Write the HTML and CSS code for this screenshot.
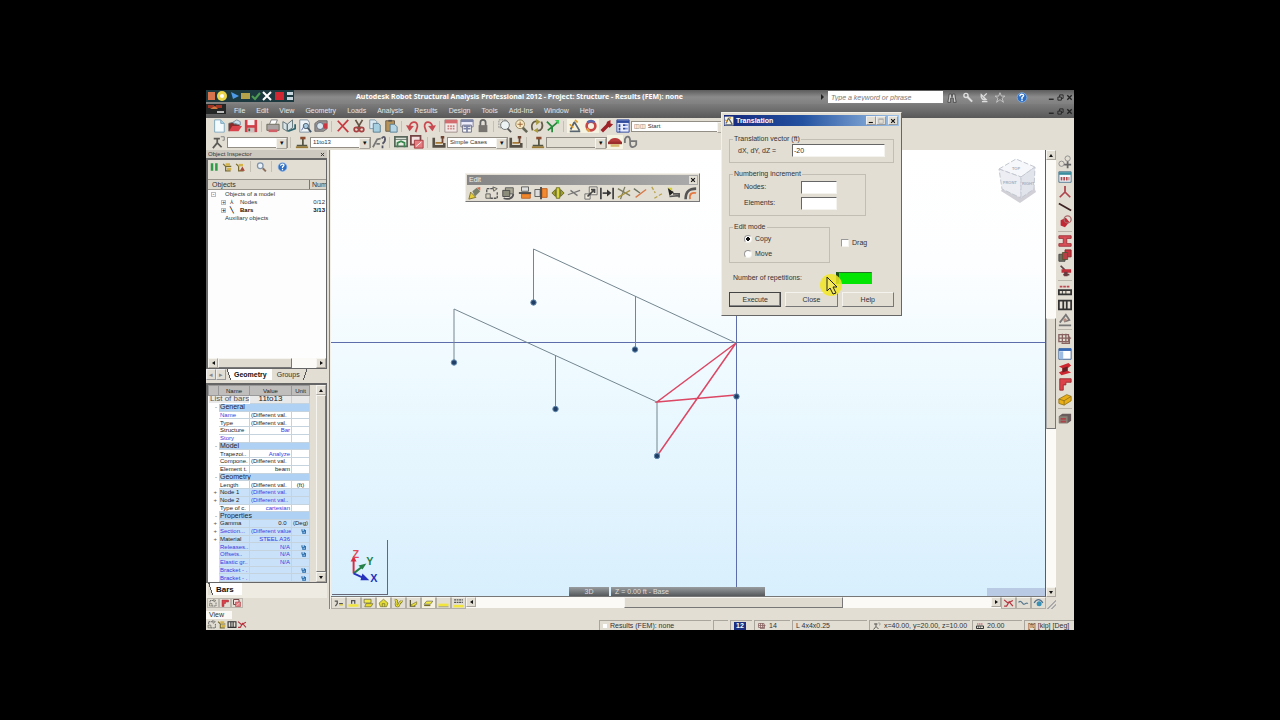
FILE: index.html
```html
<!DOCTYPE html>
<html lang="en">
<head>
    <meta charset="UTF-8">
    <meta name="viewport" content="width=device-width, initial-scale=1.0">
    <title>Autodesk Robot Structural Analysis Professional 2012</title>
    <link rel="stylesheet" href="styles.css">
</head>
<body>
    <!-- Icon sprite -->
    <svg class="sprite" aria-hidden="true">
        <symbol id="new" viewBox="0 0 16 16"><path d="M3 1h7l4 4v10H3z" fill="#f4fbff" stroke="#7aa2b8"/><path d="M10 1v4h4" fill="#a8d4ea" stroke="#7aa2b8"/></symbol>
        <symbol id="open" viewBox="0 0 16 16"><path d="M1 14V5l5-1 1 2h6v3" fill="#8b2a2a" stroke="#555"/><path d="M1 14l4-6h11l-4 6z" fill="#d9434b"/><path d="M5 4l5-3 4 2v4z" fill="#cde2ef" stroke="#789"/></symbol>
        <symbol id="save" viewBox="0 0 16 16"><path d="M1 1h14v14H1z" fill="#cf4048"/><path d="M4 1h8v6H4z" fill="#f3eeee"/><path d="M4 10h8v5H4z" fill="#c9c0c0"/><path d="M5 11h2v3H5z" fill="#553"/></symbol>
        <symbol id="print" viewBox="0 0 16 16"><path d="M4 6l2-5h7l-2 5" fill="#fff" stroke="#777"/><path d="M1 6h14v7H1z" fill="#aaa3a3" stroke="#665"/><path d="M3 12h10v3H3z" fill="#cf6068"/></symbol>
        <symbol id="book" viewBox="0 0 16 16"><path d="M1 3l5 3v8L1 11zM6 6l6-5v9l-6 4z" fill="#d8e4e8" stroke="#566a70"/><path d="M7 14l8-3V6" fill="none" stroke="#2d6670" stroke-width="2"/></symbol>
        <symbol id="preview" viewBox="0 0 16 16"><path d="M2 1h9l2 3v11H2z" fill="#eef4f8" stroke="#789"/><circle cx="9" cy="8" r="3" fill="#a6c8de" stroke="#456"/><path d="M11 10l4 5" stroke="#456" stroke-width="2"/><path d="M4 13l3-5" stroke="#569"/></symbol>
        <symbol id="capture" viewBox="0 0 16 16"><path d="M1 5l4-3h10v9l-4 3H1z" fill="#9a9393" stroke="#666"/><circle cx="7" cy="8" r="4" fill="#d9e6ee" stroke="#567"/><path d="M11 5h4v6h-4z" fill="#cc3640"/></symbol>
        <symbol id="delete" viewBox="0 0 16 16"><path d="M2 2l12 13M14 1L2 14" stroke="#c93a40" stroke-width="2"/></symbol>
        <symbol id="cut" viewBox="0 0 16 16"><path d="M4 1l6 10M12 1L6 11" stroke="#654" stroke-width="2"/><circle cx="5" cy="12" r="2.500" fill="none" stroke="#a84242" stroke-width="2"/><circle cx="11" cy="12" r="2.500" fill="none" stroke="#a84242" stroke-width="2"/></symbol>
        <symbol id="copy" viewBox="0 0 16 16"><path d="M2 1h6l2 2v8H2z" fill="#dceaf2" stroke="#7894a4"/><path d="M6 5h6l2 2v8H6z" fill="#a7cfe2" stroke="#55798c"/></symbol>
        <symbol id="paste" viewBox="0 0 16 16"><path d="M2 2h10v12H2z" fill="#b59258" stroke="#654"/><path d="M5 1h4v2H5z" fill="#555"/><path d="M7 6h5l3 3v6H7z" fill="#b6d6e6" stroke="#55798c"/></symbol>
        <symbol id="undo" viewBox="0 0 16 16"><path d="M4 10C4 2 14 1 13 9l-2 6" fill="none" stroke="#c84a50" stroke-width="2"/><path d="M0 7l9 1-5 6z" fill="#c84a50"/></symbol>
        <symbol id="redo" viewBox="0 0 16 16"><path d="M12 10C12 2 2 1 3 9l2 6" fill="none" stroke="#c84a50" stroke-width="2"/><path d="M16 7l-9 1 5 6z" fill="#c84a50"/></symbol>
        <symbol id="calc" viewBox="0 0 16 16"><path d="M1 1h14v14H1z" fill="#f3e9e6" stroke="#998888"/><path d="M1 1h14v4H1z" fill="#d46b6e"/><path d="M4 8h8M4 11h8" stroke="#cc8484" stroke-width="2" stroke-dasharray="2 1"/></symbol>
        <symbol id="tables" viewBox="0 0 16 16"><path d="M1 1h14v8H1z" fill="#eef" stroke="#778"/><path d="M1 2h14" stroke="#7d86a8" stroke-width="3"/><path d="M3 7h10v8H3z" fill="#fff" stroke="#667"/><path d="M4 8h8M4 11h8M8 8v7" stroke="#7d86a8" stroke-width="2"/></symbol>
        <symbol id="lock" viewBox="0 0 16 16"><path d="M5 8V4a3 3 0 016 0v4" fill="none" stroke="#666" stroke-width="2"/><path d="M3 7h10v8H3z" fill="#77736f"/></symbol>
        <symbol id="zoomwin" viewBox="0 0 16 16"><path d="M1 1h9v9H1z" fill="none" stroke="#888" stroke-dasharray="2 1"/><circle cx="8" cy="7" r="5" fill="#edf2f3" stroke="#66696a"/><path d="M11 11l4 4" stroke="#555" stroke-width="2"/></symbol>
        <symbol id="zoomplus" viewBox="0 0 16 16"><circle cx="7" cy="6" r="5" fill="#f6e9c4" stroke="#8c7a50"/><path d="M4 6h6M7 3v6" stroke="#965a2c"/><path d="M10 10l5 5" stroke="#665" stroke-width="3"/></symbol>
        <symbol id="rotate" viewBox="0 0 16 16"><path d="M3 13C0 5 5 2 8 3M13 3c3 6 0 11-5 10" fill="none" stroke="#675c48" stroke-width="2"/><path d="M7 0l5 3-5 4zM9 10l-5 3 5 3z" fill="#a99b40"/></symbol>
        <symbol id="axesgreen" viewBox="0 0 16 16"><path d="M1 3l6 6v6M7 9l7-6M2 13l5-4" fill="none" stroke="#26883a" stroke-width="2"/><path d="M10 1h5v5z" fill="#3fca55"/></symbol>
        <symbol id="edit" viewBox="0 0 16 16"><path d="M1 1h14v14H1z" fill="#f7f3df"/><path d="M2 14h12M7 4l-4 8M7 3l6 10" fill="none" stroke="#596471" stroke-width="2"/><path d="M2 6l4 4M8 1l3 3" stroke="#db9d30" stroke-width="2"/></symbol>
        <symbol id="ring" viewBox="0 0 16 16"><circle cx="8" cy="8" r="5" fill="none" stroke="#c84646" stroke-width="3"/><path d="M4 4a6 6 0 018 0" fill="none" stroke="#5967af" stroke-width="3"/><path d="M3 11l3 3" stroke="#dba045" stroke-width="3"/></symbol>
        <symbol id="wrench" viewBox="0 0 16 16"><path d="M2 14l8-8" stroke="#9e2328" stroke-width="4"/><path d="M8 3l4-2v4l3 1-4 4-4-3z" fill="#9e2328"/></symbol>
        <symbol id="layout" viewBox="0 0 16 16"><path d="M1 1h14v14H1z" fill="#e8eeff" stroke="#263d94"/><path d="M1 3h14" stroke="#304c9e" stroke-width="3"/><path d="M4 6v9M8 7h5M8 11h5" stroke="#304c9e" stroke-width="2" stroke-dasharray="3 1"/></symbol>
        <symbol id="node" viewBox="0 0 16 16"><path d="M6 3v6l-5 6M6 9l5 5M2 4h7" fill="none" stroke="#5b5a54" stroke-width="2"/><path d="M10 2h4v4h-2" fill="none" stroke="#777" stroke-width="1"/></symbol>
        <symbol id="support" viewBox="0 0 16 16"><path d="M2 12h12M9 12V4" stroke="#554" stroke-width="2"/><path d="M6 2h6v3H6z" fill="#8a4b30"/><path d="M1 14h14" stroke="#9a7a34" stroke-width="2"/></symbol>
        <symbol id="query" viewBox="0 0 16 16"><path d="M1 14L6 5l4-1M5 10h4" fill="none" stroke="#777" stroke-width="2"/><path d="M11 4c4-5 6 2 1 6M12 12v3" fill="none" stroke="#556" stroke-width="2"/></symbol>
        <symbol id="frame" viewBox="0 0 16 16"><path d="M1 2h14v11H1z" fill="#e9efe4" stroke="#59685b" stroke-width="2"/><path d="M1 5h14" stroke="#59685b"/><path d="M4 14V9l4-2 4 2v5" fill="none" stroke="#3b8750" stroke-width="2"/></symbol>
        <symbol id="framered" viewBox="0 0 16 16"><path d="M1 1h11v10H1z" fill="#f4dfdf" stroke="#754444" stroke-width="2"/><path d="M5 6h10v9H5z" fill="#e47c80" stroke="#a1363c"/><path d="M7 13l6-5" stroke="#fff"/></symbol>
        <symbol id="load" viewBox="0 0 16 16"><path d="M2 3v10h12V9" fill="none" stroke="#554f45" stroke-width="3"/><path d="M4 9h8" fill="none" stroke="#a87932" stroke-width="2"/><path d="M10 1h4v3h-4zM11 4h2v5h-2z" fill="#704432"/></symbol>
        <symbol id="burger" viewBox="0 0 16 16"><path d="M1 8c1-6 13-6 14 0z" fill="#b73b3b"/><path d="M0 9h16" stroke="#9c2d2d" stroke-width="3"/><path d="M3 12h10" stroke="#d5b76d" stroke-width="3"/></symbol>
        <symbol id="wave" viewBox="0 0 16 16"><path d="M1 9V5c2-5 6-4 6 2v3c0 5 5 5 7 1V7H8" fill="none" stroke="#777" stroke-width="2"/></symbol>
        <symbol id="pause" viewBox="0 0 16 16"><path d="M4 2v12M11 2v12" stroke="#2f9a48" stroke-width="4"/></symbol>
        <symbol id="tree" viewBox="0 0 16 16"><path d="M1 3l4 4h9M5 6v8h8" fill="none" stroke="#776b30" stroke-width="2"/><path d="M5 2h7v4H5zM7 9h7v4H7z" fill="#d3b44c"/></symbol>
        <symbol id="treered" viewBox="0 0 16 16"><path d="M1 3l4 4M5 6v8h8" fill="none" stroke="#776b30" stroke-width="2"/><path d="M5 3h7v4H5z" fill="#d3b44c"/><path d="M7 14l4-7 4 7z" fill="#a74838"/></symbol>
        <symbol id="search" viewBox="0 0 16 16"><circle cx="6" cy="6" r="4.500" fill="#eaf3fa" stroke="#7f93aa" stroke-width="2"/><path d="M10 10l5 5" stroke="#8c715d" stroke-width="3"/></symbol>
        <symbol id="help" viewBox="0 0 16 16"><circle cx="8" cy="8" r="7" fill="#2e6fc4" stroke="#8db6e8"/><path d="M5 6c0-4 7-3 5 0L8 8v2M8 11v2" fill="none" stroke="#fff" stroke-width="2"/></symbol>
        <symbol id="brush" viewBox="0 0 16 16"><path d="M1 15l2-8 6 6z" fill="#e6cf34" stroke="#776c30"/><path d="M5 6l5-4 4 4-6 6z" fill="#777e69"/><path d="M10 2l4-1v4z" fill="#c96a4b"/></symbol>
        <symbol id="boxes" viewBox="0 0 16 16"><path d="M2 7V3h8M14 7v7H6" fill="none" stroke="#555" stroke-width="1.500" stroke-dasharray="3 1"/><path d="M9 1l5 2-4 3zM1 9h5v5H1z" fill="#d8d3be" stroke="#555"/></symbol>
        <symbol id="turn" viewBox="0 0 16 16"><path d="M5 2h9v7H5z" fill="#aaa997" stroke="#555"/><path d="M2 5h8v7H2z" fill="#8c8c7a" stroke="#444"/><path d="M3 14c5 2 11 0 11-5" fill="none" stroke="#555" stroke-width="2"/></symbol>
        <symbol id="mirrorh" viewBox="0 0 16 16"><path d="M4 1h8v5H4z" fill="#ddd" stroke="#555"/><path d="M4 9h10v5H4z" fill="#ef862c" stroke="#b96025"/><path d="M1 8h14" stroke="#444" stroke-width="2"/></symbol>
        <symbol id="mirrorv" viewBox="0 0 16 16"><path d="M1 4h6v8H1z" fill="#ddd" stroke="#555"/><path d="M9 3h6v10H9z" fill="#f18a30" stroke="#b95e22"/><path d="M8 1v14" stroke="#444" stroke-width="2"/></symbol>
        <symbol id="split" viewBox="0 0 16 16"><path d="M5 4v8L1 8zM11 4v8l4-4z" fill="#a2a22a" stroke="#666325"/><path d="M6 2h4v12H6z" fill="#d8d43c" stroke="#66681f"/></symbol>
        <symbol id="divide" viewBox="0 0 16 16"><path d="M1 10L15 5M4 5l8 6" stroke="#777" stroke-width="1.500"/></symbol>
        <symbol id="scale" viewBox="0 0 16 16"><path d="M1 9h6v6H1zM6 1h9v9H6z" fill="#eeeade" stroke="#666"/><path d="M4 12l8-8M8 4h4v4" fill="none" stroke="#444" stroke-width="2"/></symbol>
        <symbol id="stretch" viewBox="0 0 16 16"><path d="M1 2v13M15 2v13M3 8h7" fill="none" stroke="#444" stroke-width="2"/><path d="M8 4l5 4-5 4z" fill="#333"/></symbol>
        <symbol id="intersect" viewBox="0 0 16 16"><path d="M1 3l14 8M9 1L4 15" stroke="#7c7b61" stroke-width="1.500"/><path d="M1 13l14-8" stroke="#a7933f" stroke-width="1.500"/></symbol>
        <symbol id="trim" viewBox="0 0 16 16"><path d="M1 3l7 5" stroke="#69705f" stroke-width="1.500"/><path d="M3 13l12-9" stroke="#d57948" stroke-width="1.500"/></symbol>
        <symbol id="extend" viewBox="0 0 16 16"><path d="M2 1l4 7M5 14l10-6" stroke="#b8a34a" stroke-width="1.500" stroke-dasharray="4 2"/></symbol>
        <symbol id="chamfer" viewBox="0 0 16 16"><path d="M2 2l7 5-5 4z" fill="#222"/><path d="M2 2h5v4z" fill="#d8d12b"/><path d="M4 12l11-1M8 9h7v4" fill="none" stroke="#555" stroke-width="2"/></symbol>
        <symbol id="fillet" viewBox="0 0 16 16"><path d="M3 15C3 6 7 3 15 3" fill="none" stroke="#555" stroke-width="3"/><path d="M8 15C7 9 10 7 15 8" fill="none" stroke="#e47840" stroke-width="2"/></symbol>
        <symbol id="numbers" viewBox="0 0 16 16"><circle cx="4" cy="10" r="3" fill="none" stroke="#888"/><circle cx="11" cy="4" r="3" fill="none" stroke="#888"/><path d="M11 7v8M7 11h8" stroke="#666" stroke-width="2"/></symbol>
        <symbol id="window" viewBox="0 0 16 16"><path d="M1 2h14v12H1z" fill="#f4f8fa" stroke="#446b86"/><path d="M1 4h14" stroke="#3a8d9d" stroke-width="3"/><path d="M3 10h10" stroke="#b04b50" stroke-width="4" stroke-dasharray="2 1"/></symbol>
        <symbol id="tripod" viewBox="0 0 16 16"><path d="M8 1v8M8 8l-6 6M8 8l6 6" stroke="#ad454c" stroke-width="2"/></symbol>
        <symbol id="bar" viewBox="0 0 16 16"><path d="M1 4l14 8" stroke="#3d2323" stroke-width="2"/></symbol>
        <symbol id="cylinder" viewBox="0 0 16 16"><path d="M3 6l6-3 4 5-5 6-5-2z" fill="#c02834"/><circle cx="11" cy="5" r="4" fill="none" stroke="#a96a6a" stroke-width="1.500"/></symbol>
        <symbol id="ibeam" viewBox="0 0 16 16"><path d="M1 2h14v3h-5v6h5v3H1v-3h5V5H1z" fill="#d95058" stroke="#9c3038"/></symbol>
        <symbol id="solids" viewBox="0 0 16 16"><path d="M8 1h7v8H8z" fill="#cb3540" stroke="#802a2a"/><path d="M1 6h7v8H1z" fill="#707060" stroke="#444"/><path d="M5 4h6v8H5z" fill="#b83f45" stroke="#553"/></symbol>
        <symbol id="release" viewBox="0 0 16 16"><path d="M3 2l5 5M6 12h7" fill="none" stroke="#5d4545" stroke-width="2"/><path d="M4 6h11v4H4z" fill="#bd2f3b"/><path d="M7 9h4v5H7z" fill="#6a3a3e"/></symbol>
        <symbol id="loadbar" viewBox="0 0 16 16"><path d="M2 4h12" stroke="#ba4950" stroke-width="2" stroke-dasharray="3 1"/><path d="M1 8h14v5H1z" fill="#e5ded1" stroke="#333" stroke-width="2"/><path d="M5 8v5M9 8v5" stroke="#333"/></symbol>
        <symbol id="film" viewBox="0 0 16 16"><path d="M1 3h14v10H1z" fill="#e4e0d8" stroke="#333" stroke-width="2"/><path d="M6 3v10M10 3v10" stroke="#333" stroke-width="2"/></symbol>
        <symbol id="mass" viewBox="0 0 16 16"><path d="M1 14h14M2 11l7-9 4 6-6 2" fill="none" stroke="#777" stroke-width="2"/><circle cx="8" cy="8" r="2" fill="#b58c80"/></symbol>
        <symbol id="mesh" viewBox="0 0 16 16"><path d="M1 3h11v8H1zM1 7h14M5 2v10M9 2v10M13 5v8H4" fill="none" stroke="#876261" stroke-width="1.500"/></symbol>
        <symbol id="form" viewBox="0 0 16 16"><path d="M1 2h14v12H1z" fill="#fff" stroke="#31588f"/><path d="M1 3h14" stroke="#3569b5" stroke-width="3"/><path d="M4 5v9" stroke="#9ebce1" stroke-width="4"/></symbol>
        <symbol id="steel" viewBox="0 0 16 16"><path d="M1 5l11-4 3 3-4 3v3l4 2-11 3-3-3 4-2V7z" fill="#cd2831"/><path d="M5 7l6-2v5l-6 2z" fill="#672126"/></symbol>
        <symbol id="angle" viewBox="0 0 16 16"><path d="M2 2h13v4H9v3H6v6H2z" fill="#db4249" stroke="#9b2b30"/></symbol>
        <symbol id="timber" viewBox="0 0 16 16"><path d="M1 8l9-5 5 2v5l-8 5-6-2z" fill="#e9ae17" stroke="#94751b"/><path d="M1 8l6 2 8-5M7 10v5" fill="none" stroke="#94751b"/></symbol>
        <symbol id="cube" viewBox="0 0 16 16"><path d="M1 6l4-3h10v8l-4 3H1z" fill="#6a5c5c"/><path d="M1 6h10v8H1z" fill="#888174"/><path d="M3 9h6M3 12h6" stroke="#b04148" stroke-width="2"/></symbol>
        <symbol id="ylayer" viewBox="0 0 16 16"><path d="M1 10l4-5h10l-4 5z" fill="#f1e945" stroke="#555"/><path d="M1 12h10" stroke="#776f20" stroke-width="2"/></symbol>
        <symbol id="ybox" viewBox="0 0 16 16"><path d="M1 2h11v6H1z" fill="#f1e945" stroke="#555"/><path d="M4 9h11l-3 5H2z" fill="#e9dd32" stroke="#655f20"/></symbol>
        <symbol id="yhouse" viewBox="0 0 16 16"><path d="M1 8l7-6 7 6-2 6H3z" fill="#e4dd35" stroke="#65642d"/><path d="M6 14V9h4v5" fill="none" stroke="#65642d"/></symbol>
        <symbol id="yload" viewBox="0 0 16 16"><path d="M3 3v10h8" fill="none" stroke="#575432" stroke-width="2"/><path d="M4 11l9-5v4l-5 3H4z" fill="#e8df38" stroke="#766f25"/></symbol>
        <symbol id="yarc" viewBox="0 0 16 16"><path d="M2 3c4 0 4 3 2 6 0 5 4 5 5 1s4-3 4-6" fill="none" stroke="#75702b" stroke-width="4"/><path d="M2 3c4 0 4 3 2 6 0 5 4 5 5 1s4-3 4-6" fill="none" stroke="#ebe13a" stroke-width="2"/></symbol>
        <symbol id="yline" viewBox="0 0 16 16"><path d="M0 10h16v4H0z" fill="#f1e53d"/><path d="M5 9V4h5v5" fill="none" stroke="#555" stroke-width="2"/></symbol>
        <symbol id="yband" viewBox="0 0 16 16"><path d="M0 9h16v4H0z" fill="#f1e53d"/><path d="M0 14h16" stroke="#888235"/></symbol>
        <symbol id="ytext" viewBox="0 0 16 16"><path d="M0 11h16v4H0z" fill="#f1e53d"/><path d="M1 3h14M1 7h14" stroke="#555" stroke-width="2" stroke-dasharray="3 1"/></symbol>
        <symbol id="ynum" viewBox="0 0 16 16"><path d="M2 5h4v4L3 13M9 9h6" fill="none" stroke="#555" stroke-width="2"/><path d="M9 11h6" stroke="#dfcc35" stroke-width="2"/></symbol>
        <symbol id="diagram" viewBox="0 0 16 16"><path d="M1 3l6 5 8-4M1 13h4l4-7 6 7" fill="none" stroke="#b53640" stroke-width="2"/></symbol>
        <symbol id="curve" viewBox="0 0 16 16"><path d="M0 7c5-5 6 4 9 3s4-3 6-1" fill="none" stroke="#5b7a90" stroke-width="2"/></symbol>
        <symbol id="eye" viewBox="0 0 16 16"><path d="M1 8c4-7 10-7 14 0" fill="none" stroke="#56708a" stroke-width="2"/><circle cx="9" cy="9" r="4" fill="#3a91b6"/></symbol>
        <symbol id="binoc" viewBox="0 0 16 16"><path d="M2 15l2-12h3l1 5 1-5h3l2 12h-4V9H6v6z" fill="#ccc" stroke="#333"/></symbol>
        <symbol id="key" viewBox="0 0 16 16"><circle cx="5" cy="5" r="3" fill="none" stroke="#ddd" stroke-width="2"/><path d="M7 7l7 7" stroke="#ddd" stroke-width="3"/></symbol>
        <symbol id="dish" viewBox="0 0 16 16"><path d="M4 4l7 7c-5 1-8-2-7-7zM12 2L8 6M5 14h8" fill="#999" stroke="#ddd" stroke-width="2"/></symbol>
        <symbol id="star" viewBox="0 0 16 16"><path d="M8 1l2 5h5l-4 3 2 6-5-4-5 4 2-6-4-3h5z" fill="#777" stroke="#ddd"/></symbol>
        <symbol id="globe" viewBox="0 0 16 16"><path d="M4 3v4a3 3 0 006 0V3M6 9v5h7V5" fill="none" stroke="#286ba9" stroke-width="3"/></symbol>
        <symbol id="minbtn" viewBox="0 0 16 16"><path d="M2 12h11" stroke="currentColor" stroke-width="3"/></symbol>
        <symbol id="maxbtn" viewBox="0 0 16 16"><path d="M2 7h8v7H2zM6 7V2h8v8h-4" fill="none" stroke="currentColor" stroke-width="2"/></symbol>
        <symbol id="framebtn" viewBox="0 0 16 16"><path d="M2 2h12v12H2zM2 4h12" fill="none" stroke="currentColor" stroke-width="2"/></symbol>
        <symbol id="closebtn" viewBox="0 0 16 16"><path d="M3 3l10 10M13 3L3 13" stroke="currentColor" stroke-width="3"/></symbol>
    </svg>

    <div class="app">
        <header class="titlebar">
            <div class="quick">
                <svg viewBox="0 0 88 12" aria-hidden="true">
                    <rect width="88" height="12" fill="#1c3940"/>
                    <rect x="2" y="2" width="7" height="8" fill="#d7744e"/><circle cx="16" cy="6" r="5" fill="#e9d64a"/><circle cx="16" cy="6" r="2" fill="#fff"/>
                    <path d="M25 2l8 4-6 3z" fill="#4e9ae6"/><path d="M35 3h9v6h-9z" fill="#b4a24b"/><path d="M46 6l3 3 5-6" fill="none" stroke="#4d9b52" stroke-width="2"/>
                    <path d="M57 2l8 8M65 2l-8 8" stroke="#fff" stroke-width="2"/><rect x="69" y="2" width="9" height="8" fill="#d12732"/><path d="M81 2h6v3h-6zM81 7h6v3h-6z" fill="#c9d8df"/>
                </svg>
            </div>
            <h1>Autodesk Robot Structural Analysis Professional 2012 - Project: Structure - Results (FEM): none</h1>
            <div class="search">
                <span class="arrow-right"></span>
                <input type="text" aria-label="Search" placeholder="Type a keyword or phrase">
                <svg class="icon"><use href="#binoc"/></svg>
                <svg class="icon"><use href="#key"/></svg>
                <svg class="icon"><use href="#dish"/></svg>
                <svg class="icon"><use href="#star"/></svg>
                <svg class="icon info"><use href="#help"/></svg>
            </div>
            <div class="winbtns">
                <svg><use href="#minbtn"/></svg><svg><use href="#maxbtn"/></svg><svg><use href="#closebtn"/></svg>
            </div>
        </header>
        <nav class="menubar">
            <svg class="logo" viewBox="0 0 20 10" aria-hidden="true"><rect width="20" height="10" fill="#252727"/><path d="M2 1h6v3H2zM10 1h6v3h-6z" fill="#a03425"/><path d="M4 5l5-3 3 3z" fill="#d17941"/><path d="M11 8h7" stroke="#bbb" stroke-width="2"/></svg>
            <ul>
                <li>File</li>
                <li>Edit</li>
                <li>View</li>
                <li>Geometry</li>
                <li>Loads</li>
                <li>Analysis</li>
                <li>Results</li>
                <li>Design</li>
                <li>Tools</li>
                <li>Add-Ins</li>
                <li>Window</li>
                <li>Help</li>
            </ul>
            <div class="winbtns">
                <svg><use href="#minbtn"/></svg><svg><use href="#maxbtn"/></svg><svg><use href="#closebtn"/></svg>
            </div>
        </nav>

        <div class="toolbar">
            <svg class="icon"><use href="#new"/></svg>
            <svg class="icon"><use href="#open"/></svg>
            <svg class="icon"><use href="#save"/></svg>
            <i class="sep"></i>
            <svg class="icon"><use href="#print"/></svg>
            <svg class="icon"><use href="#book"/></svg>
            <svg class="icon"><use href="#preview"/></svg>
            <svg class="icon"><use href="#capture"/></svg>
            <i class="sep"></i>
            <svg class="icon"><use href="#delete"/></svg>
            <svg class="icon"><use href="#cut"/></svg>
            <svg class="icon"><use href="#copy"/></svg>
            <svg class="icon"><use href="#paste"/></svg>
            <i class="sep"></i>
            <svg class="icon"><use href="#undo"/></svg>
            <svg class="icon"><use href="#redo"/></svg>
            <i class="sep"></i>
            <svg class="icon"><use href="#calc"/></svg>
            <svg class="icon"><use href="#tables"/></svg>
            <svg class="icon"><use href="#lock"/></svg>
            <i class="sep"></i>
            <svg class="icon"><use href="#zoomwin"/></svg>
            <svg class="icon"><use href="#zoomplus"/></svg>
            <svg class="icon"><use href="#rotate"/></svg>
            <svg class="icon"><use href="#axesgreen"/></svg>
            <i class="sep"></i>
            <svg class="icon active"><use href="#edit"/></svg>
            <svg class="icon active"><use href="#ring"/></svg>
            <svg class="icon"><use href="#wrench"/></svg>
            <svg class="icon"><use href="#layout"/></svg>
            <div class="combo combo-wide">
                <select aria-label="Layout"><option>&#9707;&#9707; Start</option></select>
            </div>
        </div>
        <div class="toolbar">
            <svg class="icon"><use href="#node"/></svg>
            <div class="combo"><select aria-label="Node selection"><option></option></select></div>
            <i class="sep"></i>
            <svg class="icon"><use href="#support"/></svg>
            <div class="combo"><select aria-label="Bar selection"><option>11to13</option></select></div>
            <svg class="icon"><use href="#query"/></svg>
            <i class="sep"></i>
            <svg class="icon"><use href="#frame"/></svg>
            <svg class="icon"><use href="#framered"/></svg>
            <i class="sep"></i>
            <svg class="icon"><use href="#load"/></svg>
            <div class="combo"><select aria-label="Load case"><option>Simple Cases</option></select></div>
            <svg class="icon"><use href="#load"/></svg>
            <i class="sep"></i>
            <svg class="icon"><use href="#support"/></svg>
            <div class="combo"><select aria-label="Mode" disabled><option></option></select></div>
            <svg class="icon active"><use href="#burger"/></svg>
            <svg class="icon"><use href="#wave"/></svg>
        </div>

        <main class="workspace">
            <aside class="sidebar">
                <div class="pane-title"><span>Object Inspector</span><svg><use href="#closebtn"/></svg></div>
                <section class="inspector">
                    <div class="inspector-tools">
                        <svg class="icon"><use href="#pause"/></svg>
                        <svg class="icon"><use href="#tree"/></svg>
                        <svg class="icon"><use href="#treered"/></svg>
                        <i class="sep"></i>
                        <svg class="icon"><use href="#search"/></svg>
                        <i class="sep"></i>
                        <svg class="icon"><use href="#help"/></svg>
                    </div>
                    <div class="tree-head"><span>Objects</span><span>Num</span></div>
                    <ul class="tree">
                        <li><i class="box">-</i><span>Objects of a model</span></li>
                        <li class="child"><i class="box">+</i><i class="mark">&#8516;</i><span>Nodes</span><em>0/12</em></li>
                        <li class="child strong"><i class="box">+</i><i class="mark">&#9586;</i><span>Bars</span><em>3/13</em></li>
                        <li><i class="box none"></i><span>Auxiliary objects</span></li>
                    </ul>
                    <div class="hscroll">
                        <span class="sbtn left"></span><span class="thumb"></span><span class="track"></span><span class="sbtn right"></span>
                    </div>
                </section>
                <div class="tabs">
                    <span class="tabnav">&#9666;</span><span class="tabnav">&#9656;</span>
                    <button class="tab on">Geometry</button>
                    <button class="tab">Groups</button>
                </div>
                <section class="props">
                    <table>
                        <colgroup><col class="c-gut"><col class="c-name"><col class="c-val"><col class="c-unit"></colgroup>
                        <thead>
                            <tr><th></th><th>Name</th><th>Value</th><th>Unit</th></tr>
                        </thead>
                        <tbody>
                            <tr class="list"><td colspan="2">List of bars</td><td>11to13</td><td></td></tr>
                            <tr class="group"><td>-</td><td colspan="3">General</td></tr>
                            <tr><td></td><td class="blue">Name</td><td>(Different val.</td><td></td></tr>
                            <tr><td></td><td>Type</td><td>(Different val.</td><td></td></tr>
                            <tr><td></td><td>Structure</td><td class="blue right">Bar</td><td></td></tr>
                            <tr><td></td><td class="blue">Story</td><td></td><td></td></tr>
                            <tr class="group"><td>-</td><td colspan="3">Model</td></tr>
                            <tr><td></td><td>Trapezoi..</td><td class="blue right">Analyze</td><td></td></tr>
                            <tr><td></td><td>Compone.</td><td>(Different val.</td><td></td></tr>
                            <tr><td></td><td>Element t.</td><td class="right">beam</td><td></td></tr>
                            <tr class="group"><td>-</td><td colspan="3">Geometry</td></tr>
                            <tr><td></td><td>Length</td><td>(Different val.</td><td>(ft)</td></tr>
                            <tr class="sel"><td>+</td><td>Node 1</td><td class="blue">(Different val.</td><td></td></tr>
                            <tr class="sel"><td>+</td><td>Node 2</td><td class="blue">(Different val..</td><td></td></tr>
                            <tr><td></td><td>Type of c.</td><td class="blue right">cartesian</td><td></td></tr>
                            <tr class="group"><td>-</td><td colspan="3">Properties</td></tr>
                            <tr class="sel"><td>+</td><td>Gamma</td><td class="right">0.0 &nbsp;</td><td>(Deg)</td></tr>
                            <tr class="sel"><td>+</td><td class="blue">Section...</td><td class="blue">(Different value</td><td><svg><use href="#globe"/></svg></td></tr>
                            <tr class="sel"><td>+</td><td>Material</td><td class="blue right">STEEL A36</td><td></td></tr>
                            <tr class="sel"><td></td><td class="blue">Releases..</td><td class="blue right">N/A</td><td><svg><use href="#globe"/></svg></td></tr>
                            <tr class="sel"><td></td><td class="blue">Offsets..</td><td class="blue right">N/A</td><td><svg><use href="#globe"/></svg></td></tr>
                            <tr class="sel"><td></td><td class="blue">Elastic gr..</td><td class="blue right">N/A</td><td></td></tr>
                            <tr class="sel"><td></td><td class="blue">Bracket - .</td><td></td><td><svg><use href="#globe"/></svg></td></tr>
                            <tr class="sel"><td></td><td class="blue">Bracket - .</td><td></td><td><svg><use href="#globe"/></svg></td></tr>
                        </tbody>
                    </table>
                    <div class="vscroll"><span class="sbtn up"></span><span class="thumb"></span><span class="sbtn down"></span></div>
                </section>
                <div class="tabs bottom"><button class="tab on">Bars</button></div>
                <div class="mini">
                    <svg class="icon"><use href="#boxes"/></svg>
                    <svg class="icon"><use href="#angle"/></svg>
                    <svg class="icon"><use href="#framered"/></svg>
                </div>
            </aside>

            <div class="center">
                <div class="viewrow">
                    <div class="canvas">
                        <!-- structural model, drawn in window coordinates -->
                        <svg class="model" viewBox="331 150 714 446" preserveAspectRatio="xMinYMin slice">
                            <path d="M331 342.500H1046M736.500 150V597" stroke="#5d6cab"/>
                            <g fill="none" stroke="#74868f">
                                <path d="M533.500 302V249L736 343"/>
                                <path d="M635.500 349V296"/>
                                <path d="M454 362V309L657 402V456"/>
                                <path d="M555.500 409V355"/>
                            </g>
                            <path d="M736 343L657 402L736 395M736 343L657 456" fill="none" stroke="#dc4764" stroke-width="1.500"/>
                            <g fill="#203e66" stroke="#6088ac">
                                <circle cx="533.500" cy="302.500" r="2.700"/>
                                <circle cx="635" cy="349.500" r="2.700"/>
                                <circle cx="454" cy="362.500" r="2.700"/>
                                <circle cx="555.500" cy="409" r="2.700"/>
                                <circle cx="657" cy="456" r="2.700"/>
                                <circle cx="736.500" cy="396.500" r="2.700"/>
                            </g>
                        </svg>
                        <svg class="viewcube" viewBox="0 0 42 48">
                            <path d="M4 34l19 12 16-11-2-5H6z" fill="#d0d0d6"/>
                            <path d="M2 12L19 2l19 8-14 10z" fill="#f6f7fa" stroke="#c3c7d0" stroke-dasharray="5 2"/>
                            <path d="M2 12l22 8v21L5 32z" fill="#eceef3" stroke="#c3c7d0" stroke-dasharray="5 2"/>
                            <path d="M24 20l14-10-1 22-13 9z" fill="#e2e4ec" stroke="#c3c7d0" stroke-dasharray="5 2"/>
                            <text x="15" y="13" class="cube-text">TOP</text>
                            <text x="6" y="27" class="cube-text">FRONT</text>
                            <text x="25" y="28" class="cube-text">RIGHT</text>
                        </svg>
                        <div class="axisbox">
                            <svg viewBox="0 0 56 55">
                                <path d="M22 34V20" stroke="#d92c40" stroke-width="2"/><path d="M19 22l3-6 3 6z" fill="#d92c40"/>
                                <path d="M22 34l9-7" stroke="#258148" stroke-width="2"/><path d="M27 26l8-2-4 6z" fill="#258148"/>
                                <path d="M22 34l11 5" stroke="#2632bc" stroke-width="2"/><path d="M31 34l7 7-9 0z" fill="#2632bc"/>
                                <text x="21" y="18" fill="#e0485a">Z</text><text x="35" y="25" fill="#258148">Y</text><text x="39" y="43" fill="#2632bc">X</text>
                            </svg>
                        </div>
                        <div class="viewlabel"><span>3D</span><span>Z = 0.00 ft - Base</span></div>
                        <div class="corner"></div>
                    </div>
                    <div class="vscroll main-v"><span class="sbtn up"></span><span class="track"></span><span class="thumb"></span><span class="track"></span><span class="sbtn down"></span></div>
                </div>
                <div class="bottomrow">
                    <svg class="icon"><use href="#ynum"/></svg>
                    <svg class="icon"><use href="#yline"/></svg>
                    <svg class="icon"><use href="#ybox"/></svg>
                    <svg class="icon active"><use href="#yhouse"/></svg>
                    <svg class="icon"><use href="#yarc"/></svg>
                    <svg class="icon"><use href="#yload"/></svg>
                    <svg class="icon active"><use href="#ylayer"/></svg>
                    <svg class="icon"><use href="#yband"/></svg>
                    <svg class="icon"><use href="#ytext"/></svg>
                    <div class="hscroll"><span class="sbtn left"></span><span class="track"></span><span class="thumb"></span><span class="track"></span><span class="sbtn right"></span></div>
                    <svg class="icon"><use href="#diagram"/></svg>
                    <svg class="icon"><use href="#curve"/></svg>
                    <svg class="icon"><use href="#eye"/></svg>
                    <span class="grip"></span>
                </div>

                <div class="edit-tools">
                    <div class="edit-title"><span>Edit</span><svg><use href="#closebtn"/></svg></div>
                    <div class="edit-row">
                        <svg class="icon"><use href="#brush"/></svg>
                        <svg class="icon"><use href="#boxes"/></svg>
                        <svg class="icon"><use href="#turn"/></svg>
                        <svg class="icon"><use href="#mirrorh"/></svg>
                        <svg class="icon"><use href="#mirrorv"/></svg>
                        <svg class="icon"><use href="#split"/></svg>
                        <svg class="icon"><use href="#divide"/></svg>
                        <svg class="icon"><use href="#scale"/></svg>
                        <svg class="icon"><use href="#stretch"/></svg>
                        <svg class="icon"><use href="#intersect"/></svg>
                        <svg class="icon"><use href="#trim"/></svg>
                        <svg class="icon"><use href="#extend"/></svg>
                        <svg class="icon"><use href="#chamfer"/></svg>
                        <svg class="icon"><use href="#fillet"/></svg>
                    </div>
                </div>
            </div>

            <div class="rightbar">
                <svg class="icon"><use href="#numbers"/></svg>
                <svg class="icon"><use href="#window"/></svg>
                <svg class="icon"><use href="#tripod"/></svg>
                <svg class="icon"><use href="#bar"/></svg>
                <svg class="icon"><use href="#cylinder"/></svg>
                <hr>
                <svg class="icon"><use href="#ibeam"/></svg>
                <svg class="icon"><use href="#solids"/></svg>
                <svg class="icon"><use href="#release"/></svg>
                <hr>
                <svg class="icon"><use href="#loadbar"/></svg>
                <svg class="icon"><use href="#film"/></svg>
                <svg class="icon"><use href="#mass"/></svg>
                <hr>
                <svg class="icon"><use href="#mesh"/></svg>
                <svg class="icon"><use href="#form"/></svg>
                <svg class="icon"><use href="#steel"/></svg>
                <svg class="icon"><use href="#angle"/></svg>
                <svg class="icon"><use href="#timber"/></svg>
                <hr>
                <svg class="icon"><use href="#cube"/></svg>
            </div>
        </main>

        <footer class="footer">
            <div class="viewname">View</div>
            <div class="status">
                <div class="status-icons">
                    <svg class="icon"><use href="#boxes"/></svg>
                    <svg class="icon"><use href="#tree"/></svg>
                    <svg class="icon"><use href="#film"/></svg>
                    <svg class="icon"><use href="#diagram"/></svg>
                </div>
                <div class="cell s-result"><i class="dot"></i>Results (FEM): none</div>
                <div class="cell s-blank"></div>
                <div class="cell s-num"><b>12</b></div>
                <div class="cell s-bars"><svg><use href="#mesh"/></svg>14</div>
                <div class="cell s-section">L 4x4x0.25</div>
                <div class="cell s-coord"><svg><use href="#node"/></svg>x=40.00, y=20.00, z=10.00</div>
                <div class="cell s-grid"><svg><use href="#loadbar"/></svg>20.00</div>
                <div class="cell s-units">[ft] [kip] [Deg]</div>
            </div>
        </footer>

        <form class="dialog" onsubmit="return false">
            <div class="dialog-title">
                <svg class="icon"><use href="#edit"/></svg>
                <span>Translation</span>
                <button type="button" aria-label="Minimize"><svg><use href="#minbtn"/></svg></button>
                <button type="button" aria-label="Maximize" disabled><svg><use href="#framebtn"/></svg></button>
                <button type="button" aria-label="Close window"><svg><use href="#closebtn"/></svg></button>
            </div>
            <div class="dialog-body">
                <fieldset class="f-vector">
                    <legend>Translation vector (ft)</legend>
                    <label for="vector">dX, dY, dZ =</label>
                    <input type="text" id="vector" value="-20">
                </fieldset>
                <fieldset class="f-number">
                    <legend>Numbering increment</legend>
                    <div class="line"><label for="nodes">Nodes:</label><input type="text" id="nodes"></div>
                    <div class="line"><label for="elements">Elements:</label><input type="text" id="elements"></div>
                </fieldset>
                <div class="mode-row">
                    <fieldset class="f-mode">
                        <legend>Edit mode</legend>
                        <label><input type="radio" name="mode" checked>Copy</label>
                        <label><input type="radio" name="mode">Move</label>
                    </fieldset>
                    <label class="drag"><input type="checkbox">Drag</label>
                </div>
                <div class="repeat">
                    <label for="repeat">Number of repetitions:</label>
                    <input type="text" id="repeat">
                </div>
                <div class="buttons">
                    <button class="default">Execute</button>
                    <button type="button">Close</button>
                    <button type="button">Help</button>
                </div>
            </div>
            <svg class="pointer" viewBox="0 0 24 24" aria-hidden="true">
                <circle cx="12" cy="12" r="11" fill="#f1e623" fill-opacity="0.850"/>
                <path d="M8 4v14l3-3 3 6 3-1-3-6h4z" fill="#f4e95a" stroke="#222"/>
            </svg>
        </form>
    </div>
</body>
</html>
```
FILE: styles.css
```css
* {
    box-sizing: border-box;
}
body {
    margin: 0;
    height: 100vh;
    padding: 90px 206px;
    background-color: #000;
    font-family: "Liberation Sans", Arial, sans-serif;
    font-size: 7px;
    line-height: 8px;
    color: #333;
}
ul {
    list-style: none;
    margin: 0;
    padding: 0;
}
i, em {
    font-style: normal;
}
svg {
    display: block;
    flex: none;
}
button, input, select {
    font: inherit;
    color: inherit;
    margin: 0;
    padding: 0;
    border-radius: 0;
}
.sprite {
    position: absolute;
    width: 0;
    height: 0;
}
.icon {
    width: 16px;
    height: 14px;
}
.active {
    background-color: #f6f2e2;
}
.app {
    position: relative;
    display: flex;
    flex-direction: column;
    height: 100%;
    background-color: #e2ded4;
    overflow: hidden;
}

/* Title and menu */
.titlebar {
    display: flex;
    align-items: center;
    height: 14px;
    background: linear-gradient(#5c5c5c, #8b8b8b 50%, #808080);
    color: #fff;
}
.quick {
    width: 88px;
    align-self: flex-start;
}
.titlebar h1 {
    flex: 1;
    margin: 0 0 0 62px;
    font-size: 7px;
    line-height: 12px;
    font-weight: bold;
    font-family: "Noto Sans", "Liberation Sans", sans-serif;
    white-space: nowrap;
}
.search {
    display: flex;
    align-items: center;
}
.search input {
    width: 115px;
    height: 12px;
    padding: 0 3px;
    margin: 0 1px 0 4px;
    border: 0;
    background-color: #fff;
    font-style: italic;
}
.search input::placeholder {
    color: #777;
}
.search .icon {
    height: 11px;
}
.search .info {
    margin: 0 18px 0 6px;
}
.arrow-right {
    border: 3px solid transparent;
    border-left-color: #222;
    border-right: 0;
}
.winbtns {
    display: flex;
    gap: 2px;
    width: 26px;
    color: #222;
}
.winbtns svg {
    width: 7px;
    height: 7px;
}
.menubar {
    display: flex;
    align-items: center;
    height: 14px;
    background: linear-gradient(#7c7c7c, #585858);
    color: #e6e6e6;
}
.logo {
    width: 20px;
    height: 10px;
    align-self: flex-start;
}
.menubar ul {
    flex: 1;
    display: flex;
    gap: 11px;
    padding-left: 8px;
}

/* Toolbars */
.toolbar {
    display: flex;
    align-items: center;
    height: 16px;
    padding-left: 5px;
}
.sep {
    width: 1px;
    height: 11px;
    margin: 0 3px 0 2px;
    background-color: #c4bfb4;
}
.combo {
    position: relative;
    width: 61px;
    height: 11px;
}
.combo select {
    display: block;
    width: 100%;
    height: 100%;
    padding: 0 12px 0 2px;
    appearance: none;
    border: 1px solid #928e86;
    background-color: #fff;
    font-size: 6px;
    color: #333;
    opacity: 1;
}
.combo select:disabled {
    background-color: #e2ded4;
}
.combo::after {
    content: "\25BE";
    position: absolute;
    right: 1px;
    top: 1px;
    width: 9px;
    height: 9px;
    border: 1px solid #aaa69e;
    border-top-color: #f6f4ee;
    border-left-color: #f6f4ee;
    background-color: #e2ded4;
    font-size: 7px;
    line-height: 7px;
    text-align: center;
    color: #111;
    pointer-events: none;
}
.combo-wide {
    width: 98px;
}

/* Workspace */
.workspace {
    flex: 1;
    display: flex;
    min-height: 0;
}
.sidebar {
    display: flex;
    flex-direction: column;
    width: 124px;
    padding-right: 2px;
    border-right: 1px solid #85827c;
}
.pane-title {
    display: flex;
    align-items: center;
    justify-content: space-between;
    height: 8px;
    padding: 0 2px;
    background-color: #cdc9c1;
    font-size: 6px;
}
.pane-title svg {
    width: 5px;
    height: 5px;
}
.inspector {
    flex: 1;
    display: flex;
    flex-direction: column;
    min-height: 0;
    border: 1px solid #666;
    border-width: 2px 1px 1px 2px;
    background-color: #fdfdfd;
}
.inspector-tools {
    display: flex;
    align-items: center;
    height: 19px;
    padding-bottom: 6px;
    background-color: #e2ded4;
}
.inspector-tools .icon {
    width: 13px;
    height: 10px;
}
.inspector-tools .sep {
    margin: 0 4px 0 3px;
}
.tree-head {
    display: flex;
    height: 11px;
    background-color: #dcd7cc;
    border: 1px solid #9a968e;
    border-width: 1px 0;
    line-height: 9px;
}
.tree-head span:first-child {
    flex: 1;
    padding-left: 4px;
    border-right: 1px solid #777;
}
.tree-head span:last-child {
    width: 16px;
    padding-left: 2px;
    overflow: hidden;
}
.tree {
    flex: 1;
    font-size: 6px;
}
.tree li {
    display: flex;
    align-items: center;
    height: 8px;
    padding: 0 1px 0 3px;
}
.tree .box {
    width: 5px;
    height: 5px;
    margin-right: 9px;
    border: 1px solid #bbb;
    line-height: 3px;
    text-align: center;
}
.tree .none {
    border-color: transparent;
}
.tree .child {
    padding-left: 13px;
}
.tree .child .box {
    margin-right: 4px;
}
.tree .mark {
    width: 10px;
}
.tree em {
    margin-left: auto;
}
.strong {
    font-weight: bold;
    color: #111;
}
.hscroll {
    display: flex;
    height: 10px;
    background-color: #fbfaf6;
}
.thumb {
    background-color: #dfdbd1;
    border: 1px solid #f6f4ee;
    border-right-color: #777;
    border-bottom-color: #777;
}
.inspector .thumb {
    flex: 3;
}
.inspector .track {
    flex: 1;
}
.sbtn {
    display: flex;
    align-items: center;
    justify-content: center;
    width: 10px;
    height: 10px;
    flex: none;
    border: 1px solid #aaa69e;
    border-top-color: #f6f4ee;
    border-left-color: #f6f4ee;
    background-color: #e2ded4;
}
.sbtn::before {
    content: "";
    border: 2px solid transparent;
}
.left::before {
    border-right: 3px solid #111;
    border-left: 0;
}
.sbtn.right::before {
    border-left: 3px solid #111;
    border-right: 0;
}
.up::before {
    border-bottom: 3px solid #111;
    border-top: 0;
}
.down::before {
    border-top: 3px solid #111;
    border-bottom: 0;
}
.tabs {
    display: flex;
    height: 14px;
    padding-bottom: 3px;
}
.tabnav {
    width: 10px;
    border: 1px outset #eee;
    line-height: 9px;
    text-align: center;
    color: #888;
}
.tab {
    padding: 0 8px 0 5px;
    border: 0;
    background: linear-gradient(108deg, transparent calc(100% - 5px), #555 calc(100% - 5px), #555 calc(100% - 4px), transparent calc(100% - 4px));
    line-height: 11px;
}
.tab.on {
    padding: 0 5px 0 8px;
    background: linear-gradient(72deg, #e2ded4 4px, #555 4px, #555 5px, #fff 5px);
    font-weight: bold;
    color: #111;
}
.props {
    display: flex;
    height: 200px;
    border: 1px solid #666;
    border-width: 2px 1px 1px 2px;
}
.props table {
    width: 101px;
    height: 100%;
    margin-right: auto;
    border-collapse: collapse;
    table-layout: fixed;
    background-color: #fff;
    font-size: 6px;
    line-height: 6px;
    color: #222;
}
.c-gut { width: 10px; }
.c-name { width: 31px; }
.c-val { width: 42px; }
.c-unit { width: 18px; }
.props th, .props td {
    padding: 0 1px;
    border: 1px solid #c5d3df;
    white-space: nowrap;
    overflow: hidden;
    text-align: left;
}
.props td:first-child {
    border-color: #fff;
    background-color: #fff;
    text-align: right;
    color: #555;
}
.props th {
    height: 10px;
    border-color: #999;
    background-color: #bfbebc;
    font-weight: normal;
    text-align: center;
}
.props .list td, .props .list td:first-child {
    background-color: #e9e9e9;
    font-size: 8px;
    text-align: center;
}
.props .group td:nth-child(2) {
    background-color: #afd2f4;
    font-size: 7px;
    color: #223;
}
.props .sel td:not(:first-child) {
    background-color: #c9e2f9;
}
.props .blue {
    color: #3a3ae0;
}
.props td.right {
    text-align: right;
}
.props td:last-child {
    text-align: center;
}
.props .group td:last-child {
    text-align: left;
}
.props td svg {
    width: 9px;
    height: 6px;
    margin-left: auto;
}
.vscroll {
    display: flex;
    flex-direction: column;
    width: 10px;
    background-color: #fbfaf6;
}
.props .thumb {
    flex: 1;
}
.bottom {
    height: 15px;
    padding-left: 2px;
    background-color: #eeebe3;
}
.bottom .tab {
    padding: 0 8px;
    font-size: 8px;
}
.mini {
    display: flex;
    height: 11px;
    padding-left: 1px;
}
.mini .icon {
    width: 12px;
    height: 10px;
    border: 1px solid #bbb7ae;
}
.center {
    position: relative;
    flex: 1;
    display: flex;
    flex-direction: column;
    min-width: 0;
    border-left: 1px solid #f2efe8;
}
.viewrow {
    flex: 1;
    display: flex;
    min-height: 0;
}
.canvas {
    position: relative;
    flex: 1;
    overflow: hidden;
    border-right: 1px solid #555d70;
    border-bottom: 1px solid #777;
    background: linear-gradient(#fff, #fdfeff 25%, #eefaff 50%, #d8effd);
}
.model {
    width: 100%;
    height: 100%;
}
.viewcube {
    position: absolute;
    top: 7px;
    right: 6px;
    width: 42px;
    height: 48px;
}
.cube-text {
    font-size: 4px;
    font-weight: bold;
    fill: #aab0bd;
}
.axisbox {
    position: absolute;
    left: 1px;
    bottom: 1px;
    width: 56px;
    height: 55px;
    border-right: 1px solid #667;
    border-bottom: 1px solid #667;
}
.axisbox text {
    font-size: 11px;
    font-weight: bold;
}
.viewlabel {
    position: absolute;
    left: 238px;
    bottom: 0;
    display: flex;
    gap: 2px;
    color: #ddd;
    line-height: 9px;
}
.viewlabel span {
    width: 154px;
    padding-left: 4px;
    background: linear-gradient(#9a9da0, #55595c);
}
.viewlabel span:first-child {
    width: 40px;
    padding: 0;
    text-align: center;
}
.corner {
    position: absolute;
    right: 0;
    bottom: 0;
    width: 58px;
    height: 8px;
    background-color: #b9cbe4;
}
.main-v .track {
    flex: 16;
}
.main-v .thumb {
    flex: 11;
    border-color: #f6f4ee #777 #777 #aaa;
}
.bottomrow {
    display: flex;
    height: 12px;
}
.bottomrow .icon {
    width: 15px;
    height: 12px;
    border: 1px solid #b3afa6;
    border-top-color: #f6f4ee;
}
.bottomrow .hscroll {
    flex: 1;
    height: 11px;
}
.bottomrow .track {
    flex: 1;
}
.bottomrow .thumb {
    flex: 0 0 41%;
}
.grip {
    width: 10px;
    background: repeating-linear-gradient(135deg, #aaa 0 1px, #e2ded4 1px 3px);
    clip-path: polygon(100% 0, 100% 100%, 0 100%);
}
.rightbar {
    display: flex;
    flex-direction: column;
    align-items: center;
    gap: 1px;
    width: 18px;
    padding-top: 5px;
}
.rightbar .icon {
    width: 14px;
}
.rightbar hr {
    width: 14px;
    margin: 1px 0;
    border: 0;
    border-top: 1px solid #b9b4a9;
}

/* Floating Edit toolbar */
.edit-tools {
    position: absolute;
    top: 23px;
    left: 134px;
    width: 235px;
    height: 29px;
    padding: 1px;
    background-color: #e2ded4;
    border: 1px solid #f2f0e9;
    border-right-color: #777;
    border-bottom-color: #777;
}
.edit-title {
    display: flex;
    align-items: center;
    justify-content: space-between;
    height: 10px;
    padding: 0 1px 0 2px;
    background: linear-gradient(90deg, #858585, #aaa);
    color: #eee;
}
.edit-title svg {
    width: 8px;
    height: 8px;
    padding: 1px;
    background-color: #e2ded4;
    color: #111;
}
.edit-row {
    display: flex;
    justify-content: space-around;
    padding-top: 1px;
}

/* Status */
.footer {
    height: 21px;
}
.viewname {
    width: 26px;
    height: 8px;
    padding-left: 3px;
    margin-top: 2px;
    background-color: #faf9f5;
}
.status {
    display: flex;
    height: 11px;
    padding-top: 1px;
    overflow: hidden;
}
.status-icons {
    display: flex;
    flex: 1;
    padding-left: 1px;
}
.status-icons .icon {
    width: 10px;
    height: 9px;
}
.cell {
    display: flex;
    align-items: center;
    gap: 3px;
    padding-left: 3px;
    border-top: 1px solid #aaa69d;
    border-left: 1px solid #aaa69d;
    margin-right: 2px;
    white-space: nowrap;
    overflow: hidden;
}
.cell svg {
    width: 8px;
    height: 8px;
}
.dot {
    width: 4px;
    height: 4px;
    background-color: #fff;
}
.s-result { width: 112px; }
.s-blank { width: 15px; }
.s-num { width: 22px; }
.s-num b {
    padding: 0 2px;
    background-color: #1d2f80;
    color: #fff;
}
.s-bars { width: 36px; }
.s-section { width: 75px; }
.s-coord { width: 101px; }
.s-grid { width: 50px; }
.s-units { width: 50px; margin-right: 0; }

/* Translation dialog */
.dialog {
    position: absolute;
    top: 22px;
    right: 172px;
    width: 181px;
    padding: 2px;
    background-color: #e2ded4;
    border: 1px solid #f2f0e9;
    border-right-color: #666;
    border-bottom-color: #666;
}
.dialog-title {
    display: flex;
    align-items: center;
    height: 11px;
    background: linear-gradient(90deg, #15277c, #2452a0 45%, #a0c4e8);
    color: #fff;
    font-weight: bold;
}
.dialog-title .icon {
    width: 10px;
    height: 10px;
}
.dialog-title span {
    flex: 1;
    padding-left: 2px;
}
.dialog-title button {
    display: flex;
    align-items: center;
    justify-content: center;
    width: 10px;
    height: 9px;
    border: 1px outset #eee;
    background-color: #e2ded4;
    color: #111;
}
.dialog-title button:disabled {
    color: #aaa;
}
.dialog-title button:last-child {
    margin: 0 1px 0 2px;
}
.dialog-title button svg {
    width: 6px;
    height: 6px;
}
.dialog-body {
    padding: 9px 5px 6px;
}
.dialog fieldset {
    margin: 0;
    padding: 1px 8px 0;
    border: 1px solid #c3beb3;
    min-width: 0;
}
.dialog legend {
    padding: 0 1px;
    margin-left: -5px;
}
.dialog input[type="text"] {
    width: 36px;
    height: 13px;
    padding: 0 1px;
    border: 1px solid #f5f3ee;
    border-top-color: #666;
    border-left-color: #666;
    background-color: #fff;
}
.f-vector {
    display: flex;
    height: 28px;
}
.f-vector label {
    width: 57px;
    line-height: 14px;
}
.dialog .f-vector input {
    width: 93px;
}
.dialog .f-number {
    width: 137px;
    height: 46px;
    margin-top: 7px;
    padding-left: 14px;
}
.dialog .f-number legend, .dialog .f-mode legend {
    margin-left: -11px;
}
.line {
    display: flex;
    height: 16px;
    align-items: center;
}
.line label {
    width: 57px;
}
.mode-row {
    display: flex;
    align-items: center;
    margin-top: 7px;
}
.dialog .f-mode {
    width: 101px;
    height: 40px;
    padding: 0 0 0 14px;
}
.f-mode label, .drag {
    display: flex;
    align-items: center;
    gap: 3px;
    height: 15px;
}
.drag {
    padding-left: 11px;
}
.dialog input[type="radio"], .dialog input[type="checkbox"] {
    appearance: none;
    width: 8px;
    height: 8px;
    border: 1px solid #999;
    border-right-color: #f5f3ee;
    border-bottom-color: #f5f3ee;
    background-color: #fff;
}
.dialog input[type="radio"] {
    border-radius: 50%;
}
.dialog input[type="radio"]:checked {
    background: radial-gradient(#111 2px, #fff 2px);
}
.repeat {
    display: flex;
    align-items: center;
    height: 13px;
    margin: 8px 0;
    padding-left: 4px;
}
.repeat label {
    width: 103px;
}
.dialog .repeat input {
    height: 12px;
    background-color: #02e402;
    border-color: #267326 #02e402 #02e402 #174f17;
    border-left-width: 3px;
}
.buttons {
    display: flex;
    gap: 4px;
}
.buttons button {
    flex: 1;
    height: 15px;
    border: 1px solid #f5f3ee;
    border-right-color: #777;
    border-bottom-color: #777;
    background-color: #e2ded4;
}
.buttons .default {
    border: 1px solid #444;
    box-shadow: inset -1px -1px #888;
}
.pointer {
    position: absolute;
    left: 97px;
    top: 160px;
    width: 24px;
    height: 24px;
}
```
